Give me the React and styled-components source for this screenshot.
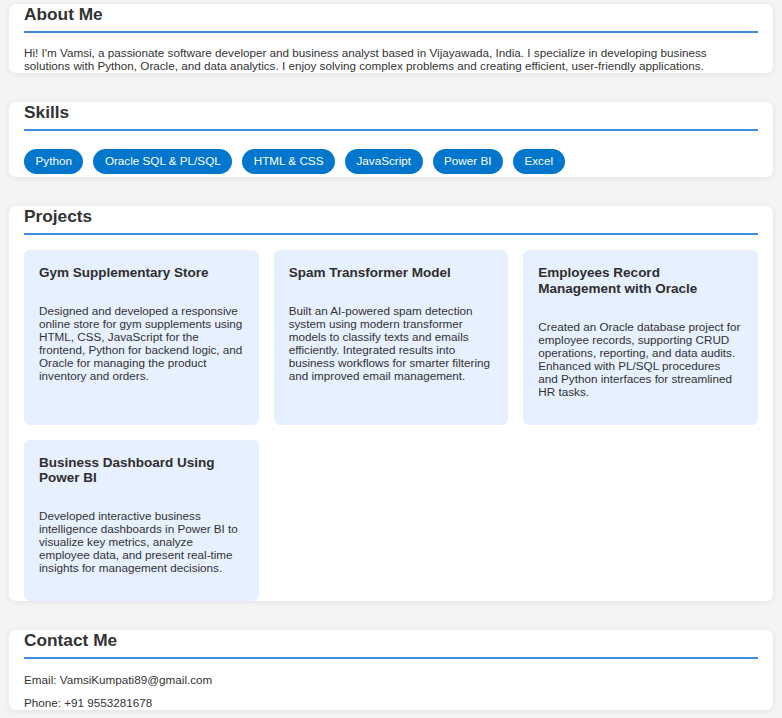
import React from "react";
import styled, { createGlobalStyle } from "styled-components";

const Global = createGlobalStyle`
  html, body { margin: 0; padding: 0; background: #f4f4f4; }
  body { font-family: "Liberation Sans", Arial, sans-serif; color: #333; }
`;

const Page = styled.main`
  display: flex;
  flex-direction: column;
  gap: 29px;
  padding: 4px 9px 7px;
`;

const Section = styled.section`
  background: #fff;
  border-radius: 7px;
  box-shadow: 0 1px 6px rgba(0, 0, 0, 0.08);
  padding: 0 15px;
  display: flow-root;
`;

const Heading = styled.h2`
  margin: 0;
  font-size: 17.3px;
  line-height: 20px;
  font-weight: 700;
  color: #333;
  padding-bottom: 7px;
  border-bottom: 2px solid #3f8fd6;
`;

const Intro = styled.p`
  margin: 12.5px 0 0;
  padding-right: 24px;
  font-size: 11.7px;
  line-height: 13.5px;
  color: #333;
`;

const ContactLine = styled.p`
  margin: ${(p) => p.$top}px 0 0;
  font-size: 11.7px;
  line-height: 13.4px;
  color: #333;
`;

const SkillList = styled.div`
  display: flex;
  flex-wrap: wrap;
  gap: 10px;
  margin-top: 18px;
  padding-bottom: 3.5px;
`;

const Pill = styled.span`
  display: inline-block;
  background: #0077cc;
  color: #fff;
  font-size: 11.7px;
  line-height: 13.4px;
  padding: 5.8px 11.5px;
  border-radius: 999px;
`;

const Grid = styled.div`
  display: grid;
  grid-template-columns: repeat(3, 1fr);
  gap: 15px;
  margin-top: 15px;
`;

const Card = styled.div`
  background: #e6f0ff;
  border-radius: 6px;
  padding: 15px;
`;

const CardTitle = styled.h3`
  margin: 0 0 23.5px;
  font-size: 13.5px;
  line-height: 15.5px;
  font-weight: 700;
  color: #2e2e2e;
`;

const CardText = styled.p`
  margin: 0 0 12px;
  font-size: 11.7px;
  line-height: 13px;
  color: #333;
`;

const skills = ["Python", "Oracle SQL & PL/SQL", "HTML & CSS", "JavaScript", "Power BI", "Excel"];

const projects = [
  {
    title: "Gym Supplementary Store",
    text: "Designed and developed a responsive online store for gym supplements using HTML, CSS, JavaScript for the frontend, Python for backend logic, and Oracle for managing the product inventory and orders.",
  },
  {
    title: "Spam Transformer Model",
    text: "Built an AI-powered spam detection system using modern transformer models to classify texts and emails efficiently. Integrated results into business workflows for smarter filtering and improved email management.",
  },
  {
    title: "Employees Record Management with Oracle",
    text: "Created an Oracle database project for employee records, supporting CRUD operations, reporting, and data audits. Enhanced with PL/SQL procedures and Python interfaces for streamlined HR tasks.",
  },
  {
    title: "Business Dashboard Using Power BI",
    text: "Developed interactive business intelligence dashboards in Power BI to visualize key metrics, analyze employee data, and present real-time insights for management decisions.",
  },
];

export default function App() {
  return (
    <>
      <Global />
      <Page>
        <Section>
          <Heading>About Me</Heading>
          <Intro>
            Hi! I'm Vamsi, a passionate software developer and business analyst based in Vijayawada, India. I specialize in developing business solutions with Python, Oracle, and data analytics. I enjoy solving complex problems and creating efficient, user-friendly applications.
          </Intro>
        </Section>
        <Section>
          <Heading>Skills</Heading>
          <SkillList>
            {skills.map((s) => (
              <Pill key={s}>{s}</Pill>
            ))}
          </SkillList>
        </Section>
        <Section>
          <Heading>Projects</Heading>
          <Grid>
            {projects.map((p) => (
              <Card key={p.title}>
                <CardTitle>{p.title}</CardTitle>
                <CardText>{p.text}</CardText>
              </Card>
            ))}
          </Grid>
        </Section>
        <Section>
          <Heading>Contact Me</Heading>
          <ContactLine $top={14}>Email: VamsiKumpati89@gmail.com</ContactLine>
          <ContactLine $top={10}>Phone: +91 9553281678</ContactLine>
        </Section>
      </Page>
    </>
  );
}
